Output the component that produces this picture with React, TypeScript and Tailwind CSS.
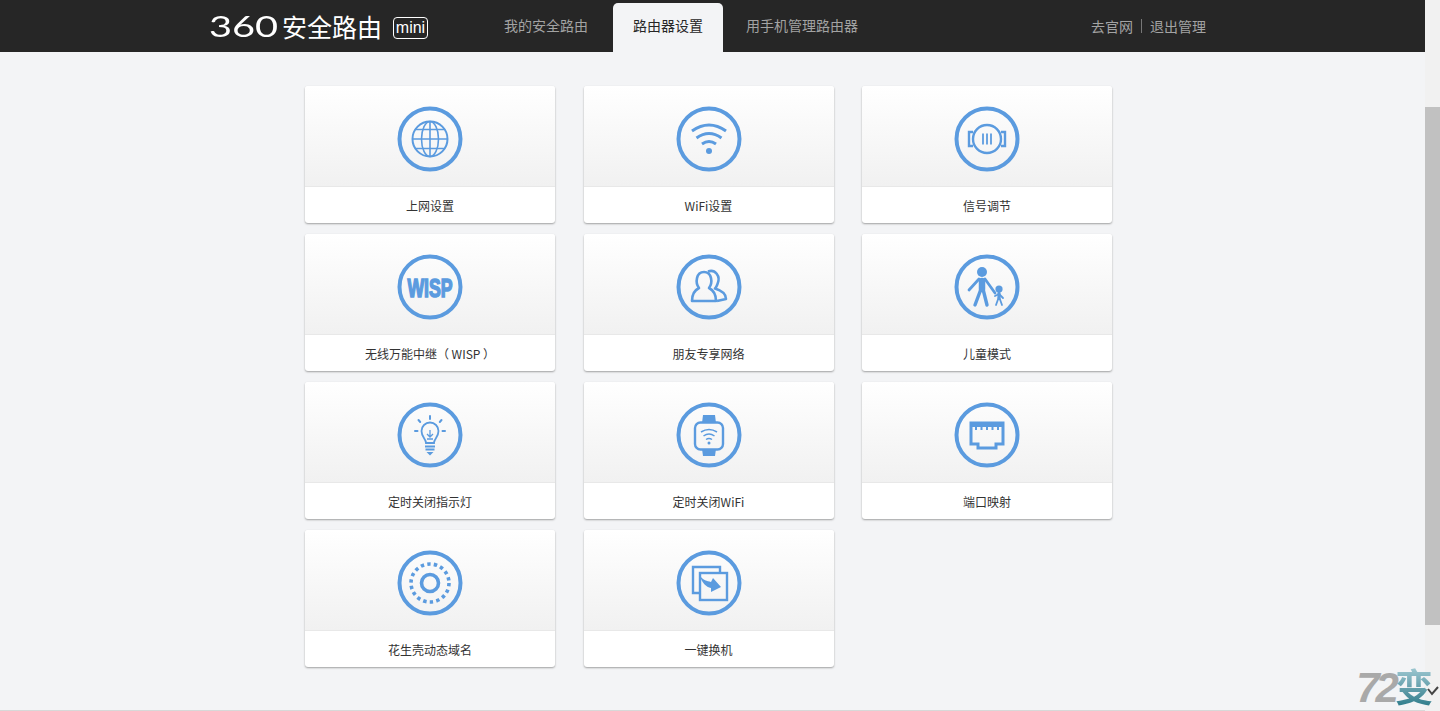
import type { ReactNode } from 'react';

const BLUE = '#5b9bdf';

function Globe() {
  return (
    <g fill="none" stroke={BLUE} strokeWidth="1.6">
      <circle r="17.5" strokeWidth="2" />
      <ellipse rx="8.5" ry="17.5" />
      <path d="M0 -17.5V17.5M-17.5 0H17.5M-14.5 -9.5H14.5M-14.5 9.5H14.5" />
    </g>
  );
}

function Wifi() {
  return (
    <g fill="none" stroke={BLUE} strokeWidth="3">
      <path d="M-17 -8Q0 -20 17 -8" />
      <path d="M-12.5 -1Q0 -10 12.5 -1" />
      <path d="M-7 5Q0 0 7 5" />
      <circle cy="12" r="3" fill={BLUE} stroke="none" />
    </g>
  );
}

function Signal() {
  return (
    <g fill="none" stroke={BLUE} strokeWidth="2.4">
      <circle r="14" />
      <path d="M-14 -7H-18V7H-14M14 -7H18V7H14" />
      <path strokeWidth="1.8" d="M-4 -5.5V5.5M0 -5.5V5.5M4 -5.5V5.5" />
    </g>
  );
}

function Wisp() {
  return (
    <text transform="scale(0.68 1)" y="9.5" textAnchor="middle" fill={BLUE} stroke={BLUE} strokeWidth="1.6" fontFamily="Liberation Sans, sans-serif" fontWeight="700" fontSize="26">
      WISP
    </text>
  );
}

function Friends() {
  return (
    <g fill="none" stroke={BLUE} strokeWidth="2.6" strokeLinejoin="round">
      <path d="M-10 1C-14 -4 -13 -15 -5 -15C3 -15 4 -4 0 1C4 3 7 7 7 14L-17 14C-17 7 -14 3 -10 1Z" />
      <path d="M-1 -15.5C6 -18 12 -11 8.5 -3C7.5 -0.5 7 1 6 1.5C11 3 17 6 17 12L8 14" />
    </g>
  );
}

function Kid() {
  return (
    <g fill="none" stroke={BLUE} strokeLinecap="round" strokeLinejoin="round">
      <circle cx="-5" cy="-15" r="5" fill={BLUE} stroke="none" />
      <path strokeWidth="6.5" d="M-5 -6V2" />
      <path strokeWidth="2.8" d="M-8 -8L-18 3M-2 -8L8 6" />
      <path strokeWidth="3.4" d="M-6 2L-12 18M-4 2L0 18" />
      <circle cx="12" cy="2" r="3.6" fill={BLUE} stroke="none" />
      <path strokeWidth="3.2" d="M12 6V11" />
      <path strokeWidth="1.8" d="M12 7L8 9M12 7L16 11M11.5 11L9 18M12.5 11L15 18" />
    </g>
  );
}

function Bulb() {
  return (
    <g fill="none" stroke={BLUE} strokeWidth="1.8">
      <path d="M-4 8C-4 4 -8.5 2 -8.5 -4A8.5 8.5 0 0 1 8.5 -4C8.5 2 4 4 4 8Z" />
      <path strokeWidth="1.3" d="M0 -5V2M-3 -1L0 2L3 -1M-3 4H3" />
      <path strokeWidth="2" strokeLinecap="round" d="M0 -19V-16M-11.5 -15L-9.8 -13M11.5 -15L9.8 -13M-15 -4H-12.5M15 -4H12.5" />
      <path strokeWidth="2" d="M-5 11.5H5M-4.5 14.5H4.5" />
      <path d="M-3.5 17H3.5L0 20.5Z" fill={BLUE} stroke="none" />
    </g>
  );
}

function Watch() {
  return (
    <g fill="none" stroke={BLUE} strokeWidth="2.4">
      <rect x="-14" y="-12.5" width="28" height="27" rx="5.5" />
      <path fill={BLUE} stroke="none" d="M-7 -12L-6 -20H6L7 -12ZM-7 14L-6 21H6L7 14Z" />
      <path strokeWidth="1.5" d="M-8 -3Q0 -8 8 -3M-5.5 1Q0 -3 5.5 1M-3 4.5Q0 2.5 3 4.5" />
      <circle cy="8" r="1.5" fill={BLUE} stroke="none" />
    </g>
  );
}

function Port() {
  return (
    <g fill="none" stroke={BLUE} strokeWidth="3">
      <path d="M-16 -12H16V9H9V13H-9V9H-16Z" />
      <path strokeWidth="0" fill={BLUE} d="M-15 -11H15V-8H-15Z" />
      <path strokeWidth="2" d="M-11 -9V-5M-5.5 -9V-5M0 -9V-5M5.5 -9V-5M11 -9V-5" />
    </g>
  );
}

function Dial() {
  return (
    <g fill="none" stroke={BLUE}>
      <circle r="8.5" strokeWidth="3.6" />
      <circle r="19" strokeWidth="3.6" strokeDasharray="3.4 3.23" />
    </g>
  );
}

function Swap() {
  return (
    <g fill="none" stroke={BLUE} strokeWidth="2.4">
      <path d="M-9 10H-16V-16H11V-10" />
      <rect x="-9" y="-10" width="27" height="27" />
      <path fill={BLUE} stroke="none" d="M-9 -7C-6 -3 -2 -2 2 -1L4 -5L12 4L2 9L2 5C-3 4 -7 0 -9 -7Z" />
    </g>
  );
}

function Ring({ children }: { children: ReactNode }) {
  return (
    <svg width="66" height="66" viewBox="-33 -33 66 66">
      <circle r="30.5" fill="none" stroke={BLUE} strokeWidth="4" />
      {children}
    </svg>
  );
}

const ITEMS: { label: string; icon: ReactNode }[] = [
  { label: '上网设置', icon: <Globe /> },
  { label: 'WiFi设置', icon: <Wifi /> },
  { label: '信号调节', icon: <Signal /> },
  { label: '无线万能中继（ WISP ）', icon: <Wisp /> },
  { label: '朋友专享网络', icon: <Friends /> },
  { label: '儿童模式', icon: <Kid /> },
  { label: '定时关闭指示灯', icon: <Bulb /> },
  { label: '定时关闭WiFi', icon: <Watch /> },
  { label: '端口映射', icon: <Port /> },
  { label: '花生壳动态域名', icon: <Dial /> },
  { label: '一键换机', icon: <Swap /> },
];

function Card({ label, icon }: { label: string; icon: ReactNode }) {
  return (
    <div className="h-[137px] w-[250px] overflow-hidden rounded-[3px] bg-white shadow-[0_1px_2px_rgba(0,0,0,0.35)]">
      <div className="flex h-[101px] justify-center border-b border-[#e8e8e8] bg-gradient-to-b from-white to-[#f1f1f1] pt-[20px]">
        <div className="h-[66px] w-[66px]">
          <Ring>{icon}</Ring>
        </div>
      </div>
      <div className="flex h-[36px] items-center justify-center pt-[2px] text-[12px] text-[#333]">{label}</div>
    </div>
  );
}

export default function App() {
  return (
    <div className="relative flex h-[711px] w-[1440px] overflow-hidden bg-[#f3f4f6] font-['Noto_Sans_CJK_SC','Liberation_Sans',sans-serif]">
      <div className="flex w-[1425px] flex-col border-b border-[#d8d8d8]">
        <header className="flex h-[52px] shrink-0 items-end bg-[#262626] pl-[209px]">
          <div className="flex h-[52px] w-[184px] items-center text-white">
            <span className="inline-block w-[73px] origin-left scale-x-[1.42] font-['Lato',sans-serif] text-[28px] leading-none font-normal">360</span>
            <span className="text-[25px] leading-none font-normal whitespace-nowrap">安全路由</span>
          </div>
          <div className="mb-[13px] flex h-[22px] w-[35px] items-center justify-center rounded-[4px] border border-white font-['Liberation_Sans',sans-serif] text-[16px] leading-none text-white">mini</div>
          <nav className="ml-[76px] flex h-[49px] items-stretch text-[14px]">
            <a className="flex items-center pb-[4px] text-[#a3a3a3]">我的安全路由</a>
            <a className="ml-[25px] flex w-[110px] items-center justify-center rounded-t-[5px] bg-[#f3f4f6] pb-[4px] text-[#262626]">路由器设置</a>
            <a className="ml-[23px] flex items-center pb-[4px] text-[#a3a3a3]">用手机管理路由器</a>
          </nav>
          <div className="mb-[18px] ml-[233px] flex h-[16px] items-center text-[14px] text-[#a3a3a3]">
            <a>去官网</a>
            <span className="mx-[8px] h-[14px] w-px bg-[#777]" />
            <a>退出管理</a>
          </div>
        </header>
        <main className="grid grid-cols-[250px_250px_250px] gap-x-[28.5px] gap-y-[11px] pt-[34px] pl-[305px]">
          {ITEMS.map((item) => (
            <Card key={item.label} label={item.label} icon={item.icon} />
          ))}
        </main>
      </div>
      <div className="h-full w-[15px] bg-[#f1f1f1] pt-[107px]">
        <div className="h-[518px] w-full bg-[#c1c1c1]" />
      </div>
      {/* watermark sitting over the bottom-right corner */}
      <div className="absolute right-[7px] bottom-[5px] flex items-end leading-none select-none">
        <span className="font-['Liberation_Sans',sans-serif] text-[42px] leading-[36px] font-bold tracking-[-4px] text-[#a9a9a9] italic">72</span>
        <span className="bg-gradient-to-b from-[#a8cfd8] to-[#2e7d8c] bg-clip-text text-[38px] leading-[42px] font-bold text-transparent">变</span>
      </div>
      <svg className="absolute right-0 bottom-[15px]" width="14" height="10" viewBox="0 0 14 10">
        <path d="M2 3L6 8L12 1" fill="none" stroke="#444" strokeWidth="2" />
      </svg>
    </div>
  );
}
